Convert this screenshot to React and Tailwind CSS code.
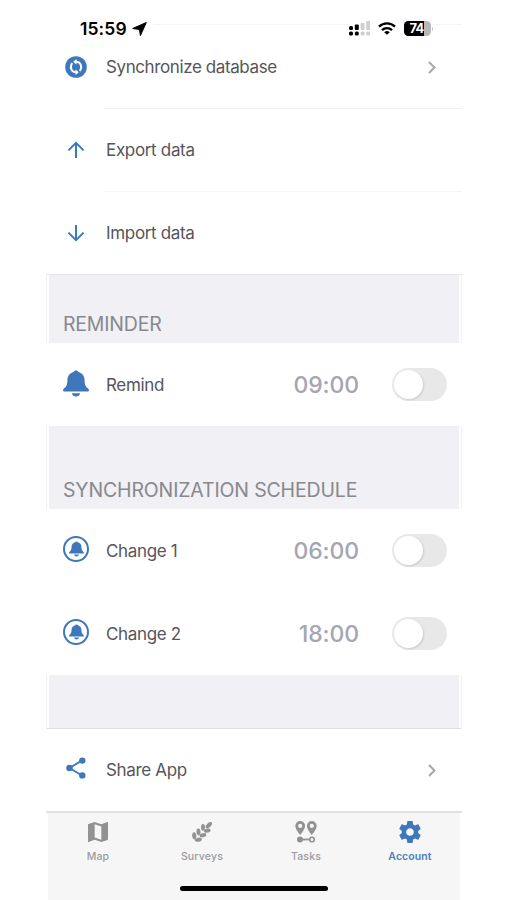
import React from "react";

const BLUE = "#3f78ba";

function Bell({ className }) {
  return (
    <svg viewBox="0 0 26 27" className={className} fill={BLUE}>
      <path d="M13 .5c-1.300 0-2 .6-2.500 1.500C6.600 3 4.500 6.200 4.400 10.200c-.1 4.300-.7 6-3.500 8.300-.8.700-.9 1.200-.8 1.900.1.700.6 1.100 1.400 1.100h23c.8 0 1.300-.4 1.400-1.100.1-.7 0-1.200-.8-1.900-2.800-2.300-3.400-4-3.500-8.300C21.500 6.200 19.400 3 15.500 2 15 1.100 14.300.5 13 .5z" />
      <path d="M8.800 23.200h8.400c-.4 2-2 3.300-4.200 3.300s-3.800-1.300-4.200-3.300z" />
    </svg>
  );
}

function CircleBell() {
  return (
    <div className="flex h-[26px] w-[26px] -translate-y-[2px] items-center justify-center rounded-full border-2 border-[#3f78ba]">
      <Bell className="h-[16px] w-[15px]" />
    </div>
  );
}

function SyncIcon() {
  return (
    <svg viewBox="0 0 22 22" className="h-[22px] w-[22px]">
      <circle cx="11" cy="11" r="10.800" fill={BLUE} />
      <g fill="none" stroke="#fff" strokeWidth="1.900">
        <path d="M10.500 5.700c5-.4 7.300 4.800 4.300 9.400" />
        <path d="M11.500 16.300c-5 .4-7.300-4.800-4.300-9.400" />
      </g>
      <path d="M11.500 3v5.600L8.200 5.700zM10.500 19v-5.600l3.300 2.900z" fill="#fff" />
    </svg>
  );
}

function Arrow({ down }) {
  return (
    <svg viewBox="0 0 18 18" className={`h-[18px] w-[18px] ${down ? "rotate-180" : ""}`} fill="none" stroke={BLUE} strokeWidth="2">
      <path d="M9 17V2M1.400 9.400L9 1.800l7.600 7.600" />
    </svg>
  );
}

function ShareIcon() {
  return (
    <svg viewBox="0 0 20 22" className="h-[22px] w-[20px] -translate-y-[2px]" fill={BLUE}>
      <path d="M16 3.500L3.500 11 16 18.500" fill="none" stroke={BLUE} strokeWidth="1.900" />
      <circle cx="16.300" cy="3.600" r="3.200" />
      <circle cx="3.500" cy="11" r="3.300" />
      <circle cx="16.300" cy="18.400" r="3.200" />
    </svg>
  );
}

function Chevron() {
  return (
    <svg viewBox="0 0 8 13" className="mr-[26px] h-[13px] w-[8px]" fill="none" stroke="#a6a6ae" strokeWidth="2">
      <path d="M1 1l5.500 5.500L1 12" />
    </svg>
  );
}

function Row({ icon, label, labelClass = "tracking-[-0.330px]", children, className = "h-[83px]" }) {
  return (
    <div className={`flex items-center ${className}`}>
      <div className="flex w-[60px] shrink-0 items-center justify-center">{icon}</div>
      <span className={`flex-1 whitespace-nowrap text-[17px] leading-6 text-[#55555a] ${labelClass}`}>{label}</span>
      {children}
    </div>
  );
}

function TimeToggle({ time }) {
  return (
    <>
      <span className="mr-[33px] translate-y-px text-[23px] font-medium tracking-[-0.100px] text-[#a5a5b3]">{time}</span>
      <div className="mr-[15px] flex h-[33px] w-[55px] items-center rounded-full bg-[#e8e8e9] p-[2px]">
        <div className="h-[29px] w-[29px] rounded-full bg-white shadow-[1px_1px_2px_rgba(0,0,0,0.13)]" />
      </div>
    </>
  );
}

function Band({ title, titleClass, className }) {
  return (
    <div className={`w-full border-x border-[#f1f1f5] px-[2px] ${className}`}>
      <div className="flex h-full items-end bg-[#f0f0f5] pl-[14px]">
        <h2 className={`whitespace-nowrap pb-[7px] text-[19.500px] leading-6 text-[#88888d] ${titleClass}`}>{title}</h2>
      </div>
    </div>
  );
}

function StatusBar() {
  return (
    <header className="relative flex h-[49px] items-start pt-[19px]">
      <div className="absolute left-[107px] right-0 top-[24px] h-px bg-[#f4f4f4]" />
      <span className="ml-[34px] w-[48px] whitespace-nowrap text-[17.500px] font-semibold leading-5 tracking-[0.100px] text-black">15:59</span>
      <svg viewBox="0 0 15 14" className="ml-[4px] mt-[3px] h-[14px] w-[15px]">
        <path d="M14.300.5L8.400 13.600 7.500 7.500.7 6.500z" stroke="#000" strokeLinejoin="round" />
      </svg>
      <div className="absolute left-[302px] top-[18px] flex h-[21px] w-[85px] items-center bg-white">
        <svg viewBox="0 0 21 15" className="ml-[1px] h-[15px] w-[21px]">
          <g fill="#000">
            <rect x="0" y="5" width="4" height="4" rx="1.500" />
            <rect x="5.800" y="3.500" width="4" height="5.500" rx="1" />
            <rect x="0" y="10.500" width="4" height="4" rx="1.500" />
            <rect x="5.800" y="10.500" width="4" height="4" rx="1.500" />
          </g>
          <g fill="#cfcfcf">
            <rect x="11.600" y="2" width="4" height="7" rx="1" />
            <rect x="17.200" y="0" width="4" height="9" rx="1" />
            <rect x="11.600" y="10.500" width="4" height="4" rx="1.500" />
            <rect x="17.200" y="10.500" width="4" height="4" rx="1.500" />
          </g>
        </svg>
        <svg viewBox="0 0 18 13" className="ml-[8px] h-[13px] w-[18px]" fill="none" stroke="#000" strokeWidth="2.300">
          <path d="M1 4.700a11.500 11.500 0 0 1 16 0M4 8.200a7.200 7.200 0 0 1 10 0" />
          <path d="M9 12.800L6.200 10.200a4.200 4.200 0 0 1 5.600 0z" fill="#000" stroke="none" />
        </svg>
        <div className="relative ml-[8px] flex h-[15px] w-[27px] items-center overflow-hidden rounded-[4.500px] bg-[#b8b8b8]">
          <div className="absolute inset-y-0 left-0 w-[20px] bg-black" />
          <span className="relative w-full pr-[2px] text-center text-[13px] font-bold leading-[15px] tracking-[-0.800px] text-white">74</span>
        </div>
        <div className="ml-px h-[4px] w-[1px] rounded-r bg-[#c4c4c4]" />
      </div>
    </header>
  );
}

function MapIcon() {
  return (
    <svg viewBox="3 3 18 18" className="h-[20px] w-[20px]" fill="#929294">
      <path d="M20.500 3l-.16.03L15 5.100 9 3 3.360 4.900c-.21.070-.36.25-.36.48V20.500c0 .28.22.5.5.5l.16-.03L9 18.900l6 2.100 5.640-1.900c.21-.07.36-.25.36-.48V3.500c0-.28-.22-.5-.5-.5zM15 19l-6-2.110V5l6 2.110V19z" />
    </svg>
  );
}

function WheatIcon() {
  return (
    <svg viewBox="0 0 20 20" className="h-[20px] w-[20px]" fill="#929294">
      <ellipse cx="2.300" cy="13.800" rx="2.100" ry="3.600" transform="rotate(-6 2.300 13.800)" />
      <ellipse cx="6.500" cy="9.800" rx="2" ry="3.400" transform="rotate(-6 6.500 9.800)" />
      <ellipse cx="11" cy="5.400" rx="1.900" ry="3.300" />
      <ellipse cx="6.400" cy="17.700" rx="3.500" ry="2" transform="rotate(-12 6.400 17.700)" />
      <ellipse cx="10.900" cy="13.200" rx="3.500" ry="2" transform="rotate(-12 10.900 13.200)" />
      <ellipse cx="15.300" cy="8.700" rx="3.400" ry="1.900" transform="rotate(-14 15.300 8.700)" />
      <ellipse cx="16.800" cy="3.200" rx="2" ry="4" transform="rotate(46 16.800 3.200)" />
    </svg>
  );
}

function TasksIcon() {
  return (
    <svg viewBox="0 0 22 22" className="h-[22px] w-[22px]" fill="#929294">
      <path fillRule="evenodd" d="M5.200 0a4.900 4.900 0 0 1 4.900 4.900c0 3.400-4.900 9-4.900 9S.3 8.300.3 4.900A4.900 4.900 0 0 1 5.200 0zm0 2.800a2.100 2.100 0 1 0 0 4.200 2.100 2.100 0 0 0 0-4.200zM16.800 0a4.900 4.900 0 0 1 4.900 4.900c0 3.400-4.900 9-4.900 9s-4.900-5.600-4.900-9A4.900 4.900 0 0 1 16.800 0zm0 2.800a2.100 2.100 0 1 0 0 4.200 2.100 2.100 0 0 0 0-4.200z" />
      <circle cx="5" cy="18.500" r="3" />
      <path d="M5 17.600h9.500v1.800H5z" />
      <circle cx="17" cy="18.500" r="2.300" fill="none" stroke="#929294" strokeWidth="1.600" />
    </svg>
  );
}

function GearIcon() {
  return (
    <svg viewBox="2 2 20 20" className="h-[22px] w-[22px]" fill={BLUE}>
      <path d="M19.430 12.980c.04-.32.070-.64.070-.98s-.03-.66-.07-.98l2.110-1.650c.19-.15.24-.42.12-.64l-2-3.460c-.12-.22-.39-.3-.61-.22l-2.490 1c-.52-.4-1.080-.73-1.690-.98l-.38-2.650C14.460 2.180 14.250 2 14 2h-4c-.25 0-.46.18-.49.42l-.38 2.650c-.61.25-1.170.59-1.690.98l-2.490-1c-.23-.09-.49 0-.61.22l-2 3.460c-.13.22-.07.49.12.64l2.110 1.650c-.04.32-.07.65-.07.98s.03.66.070.980l-2.110 1.650c-.19.15-.24.42-.12.640l2 3.460c.12.22.39.3.610.22l2.490-1c.52.4 1.080.73 1.690.98l.38 2.650c.03.24.24.42.49.42h4c.25 0 .46-.18.49-.42l.38-2.650c.61-.25 1.170-.59 1.690-.98l2.490 1c.23.09.49 0 .61-.22l2-3.460c.12-.22.070-.49-.12-.64l-2.110-1.650zM12 15.500c-1.930 0-3.500-1.570-3.500-3.500s1.570-3.500 3.500-3.500 3.500 1.570 3.500 3.500-1.570 3.500-3.500 3.500z" />
    </svg>
  );
}

function Tab({ icon, label, active }) {
  return (
    <div className="flex w-[104px] flex-col items-center">
      <div className="flex h-[22px] items-center">{icon}</div>
      <span className={`mt-[7px] text-[10.500px] leading-[14px] ${active ? "font-semibold tracking-[0.100px] text-[#4d80bd]" : "font-medium tracking-[0.200px] text-[#9b9b9d]"}`}>{label}</span>
    </div>
  );
}

export default function App() {
  return (
    <div className="flex h-[900px] w-[507px] overflow-hidden bg-white pl-[46px] font-['Inter','Liberation_Sans',sans-serif]">
      <div className="flex w-[416px] flex-col">
        <StatusBar />
        <Row icon={<SyncIcon />} label="Synchronize database" labelClass="tracking-[-0.400px]" className="h-[36px]">
          <Chevron />
        </Row>
        <div className="ml-[58px] mt-[23px] h-px bg-[#efeff0]" />
        <Row icon={<Arrow />} label="Export data" className="h-[82px]" />
        <div className="ml-[58px] h-px bg-[#f4f4f5]" />
        <Row icon={<Arrow down />} label="Import data" className="h-[82px]" />
        <Band title="REMINDER" titleClass="tracking-[-0.200px]" className="h-[69px] border-t border-t-[#e5e5e9]" />
        <Row icon={<Bell className="h-[27px] w-[26px] -translate-y-[1px]" />} label="Remind">
          <TimeToggle time="09:00" />
        </Row>
        <Band title="SYNCHRONIZATION SCHEDULE" titleClass="tracking-[-0.150px]" className="h-[83px]" />
        <Row icon={<CircleBell />} label="Change 1">
          <TimeToggle time="06:00" />
        </Row>
        <Row icon={<CircleBell />} label="Change 2">
          <TimeToggle time="18:00" />
        </Row>
        <Band className="h-[54px] border-b border-b-[#dfdfe4]" />
        <Row icon={<ShareIcon />} label="Share App" className="h-[82px]">
          <Chevron />
        </Row>
        <nav className="flex flex-1 flex-col border-t-2 border-[#e2e2e3]">
          <div className="mx-[2px] flex flex-1 flex-col bg-[#f6f6f7]">
            <div className="-mx-[2px] flex pt-[8px]">
              <Tab icon={<MapIcon />} label="Map" />
              <Tab icon={<WheatIcon />} label="Surveys" />
              <Tab icon={<TasksIcon />} label="Tasks" />
              <Tab icon={<GearIcon />} label="Account" active />
            </div>
            <div className="mt-auto mb-[9px] h-[5px] w-[148px] self-center rounded-full bg-black" />
          </div>
        </nav>
      </div>
    </div>
  );
}
